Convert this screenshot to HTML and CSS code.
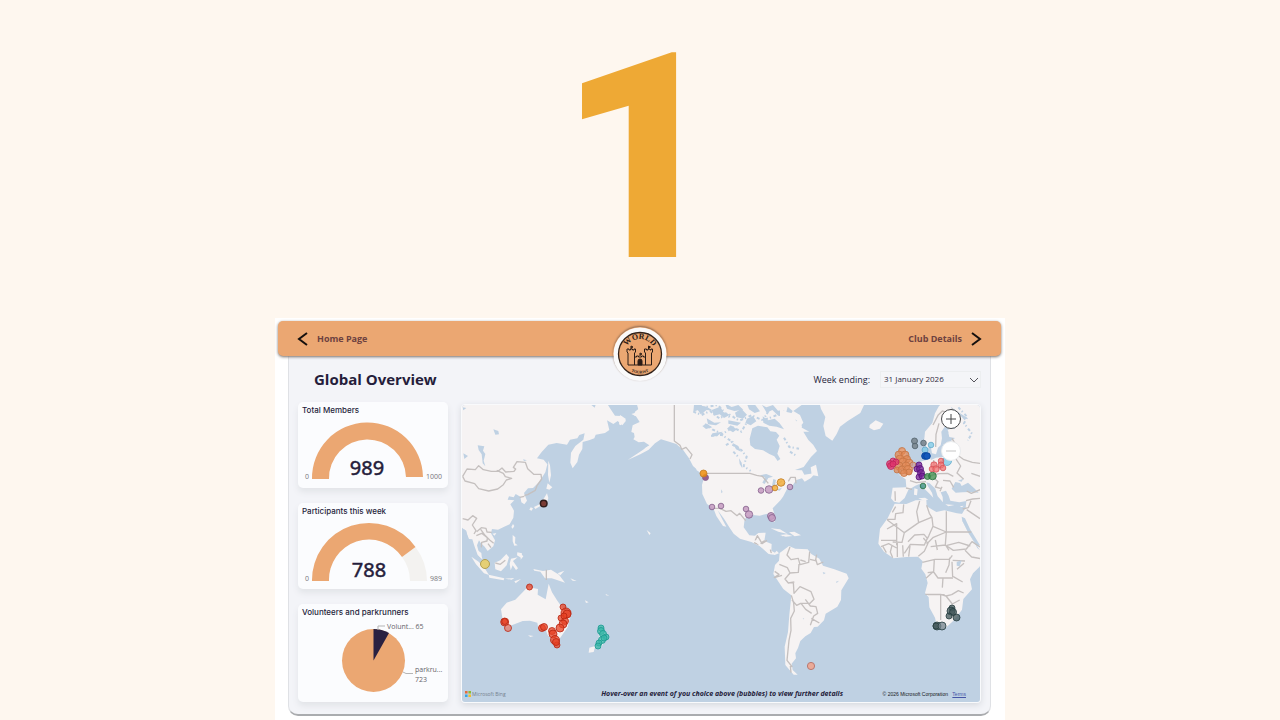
FILE: index.html
```html
<!DOCTYPE html>
<html lang="en">
<head>
<meta charset="utf-8">
<title>Global Overview</title>
<link rel="stylesheet" href="styles.css">
</head>
<body>
<div class="hero">1</div>
<main class="dashboard">
  <header class="banner">
    <a class="nav-link" href="#home"><svg class="arrow" viewBox="0 0 12 14"><path d="M10 1 2 7l8 6"/></svg>Home Page</a>
    <a class="nav-link" href="#club">Club Details<svg class="arrow" viewBox="0 0 12 14"><path d="m2 1 8 6-8 6"/></svg></a>
    <svg class="logo" viewBox="0 0 54 54" role="img" aria-label="World Tourist">
      <defs><path id="arc-top" d="M12 27a15 15 0 0 1 30 0"/><path id="arc-bottom" d="M7.500 27a19.500 19.500 0 0 0 39 0"/></defs>
      <circle cx="27" cy="27" r="26.500" fill="#fafafa"/>
      <circle cx="27" cy="27" r="21.500" fill="#eba772" stroke="#33241c" stroke-width="1.300"/>
      <text class="logo-top"><textPath href="#arc-top" startOffset="50%">WORLD</textPath></text>
      <text class="logo-bottom"><textPath href="#arc-bottom" startOffset="50%">TOURIST</textPath></text>
      <g fill="none" stroke="#2b1c16" stroke-width="1">
        <path d="M15 38V26l-1-1v-3h2v1h1.500v-1h2v1H21v-1h1.500v3l-1 1v4h2v-1h2v1h3v-1h2v1h2v-4l-1-1v-3h2v1h1.500v-1h2v1H38v-1h1.500v3l-1 1v12zM21.500 30v8M32.500 30v8M18 22v-3l2 1-2 1M35.500 22v-3l2 1-2 1M27 29v-3l2 1-2 1"/>
        <path fill="#2b1c16" d="M25 38v-4a2 2 0 0 1 4 0v4z"/>
      </g>
    </svg>
  </header>
  <section class="panel">
    <div class="title-row">
      <h1>Global Overview</h1>
      <label for="week">Week ending:</label>
      <span class="picker"><select id="week"><option>31 January 2026</option></select><svg viewBox="0 0 10 6"><path d="m1 1 4 4 4-4"/></svg></span>
    </div>
    <div class="content">
      <div class="cards">
        <article class="card">
          <h2>Total Members</h2>
          <svg viewBox="298 416 150 72">
            <path class="orange" d="M312 479a55.500 55.500 0 0 1 111-2h-17a38.500 38.500 0 0 0-77 2z"/>
            <text class="value" x="367" y="475">989</text><text class="tick" x="307" y="479">0</text><text class="tick" x="434" y="479">1000</text>
          </svg>
        </article>
        <article class="card">
          <h2>Participants this week</h2>
          <svg viewBox="298 517 150 72">
            <path fill="#f3f2f0" d="M415.500 547A57 57 0 0 1 427 581h-17a40 40 0 0 0-8-24z"/>
            <path class="orange" d="M312 581a57 57 0 0 1 103.500-34L402 557a40 40 0 0 0-73 24z"/>
            <text class="value" x="369" y="577">788</text><text class="tick" x="307" y="581">0</text><text class="tick" x="436" y="581">989</text>
          </svg>
        </article>
        <article class="card">
          <h2>Volunteers and parkrunners</h2>
          <svg viewBox="298 618 150 84">
            <circle class="orange" cx="373.500" cy="660.500" r="31.500"/>
            <path fill="#2a2141" d="M373.500 660.500V629a31.500 31.500 0 0 1 15.500 4z"/>
            <path fill="none" stroke="#b5b5b5" d="M378 630v-4h7M403 672l3 1.500h7"/>
            <text class="legend" x="387" y="629">Volunt... 65</text><text class="legend" x="415" y="672">parkru...</text><text class="legend" x="415" y="682">723</text>
          </svg>
        </article>
      </div>
      <div class="map">
        <svg class="world" viewBox="462 405 518 297" role="img" aria-label="World map of events">
          <rect x="462" y="405" width="518" height="297" fill="#bfd1e3"/>
          <!-- Asia -->
          <g transform="translate(460 400) scale(.33333)">
            <path class="land" d="M0 0H435L450 25 465 47 485 48 498 62 487 76 473 63 460 72 441 61 448 90 435 99 407 104 403 115 387 121 368 126 367 147 357 164 352 186 338 205 331 188 333 158 346 138 370 119 374 100 358 105 352 115 330 119 321 134 290 129 265 134 245 156 231 175 251 179 262 193 256 217 238 245 219 264 204 265 192 279 201 302 193 313 184 307 181 290 167 282 161 292 147 289 143 299 163 301 151 313 162 332 160 353 149 373 131 381 114 389 96 387 93 400 105 421 100 439 83 453 74 440 62 429 57 421 51 436 58 463 70 480 53 465 43 437 37 418 27 417 17 392 0 378z"/>
            <path class="land" d="M265 182l5 14 3 30-5 22-4-23zM263 250l14 12-9 7-9-3zM261 280l4 14-6 20-19 5-14 8-4-6 20-10 10-16zM212 322l7 3-4 7-7-3zM159 372l4 6-5 8-4-5zM158 405l8 7-1 18 8 6-10 1-5-13zM172 457l14 3-2 14-13-8zM430 45l30-2-8 8zM525 35l15-12v30l-18-7zM522 100l18-14v40l-15-9zM97 401l12-2-5 8z"/>
            <path class="water" d="M100 88l15 5 2 10-11 1zM53 136l20 3-4 13 7 10-5 20 5 17-8-9-3-27-9-13zM105 167l-10 23-17 12 17-12zM8 22l11 2-9 7zM10 160l14 8-11 9zM189 178l12 3-9 2zM393 14h14l-3 9zM11 387l8 5 4 21-13-17z"/>
            <path class="border" d="M8 229l13-22 25 2 10-12 14 12 24 5 20 0 12-10 11 12 25-2 5-7-7-5 11-17 25 2 7 19 18 17 22 0 2 14-14 20-5 14-23 13-10 2M110 211l20 9 6 10 19 5-16 5-9 14-17 13-27 6-30-7-12-15-29-8-7-14M179 292l14-3M8 356l16 4 14-13 12 8-13 20 11 17-6 10M50 395l14-12 14 2 3 11 14 1M62 388l13 18 14 14 12 10M49 407l16-7 17 13-1 10-16 4-1 15M84 431l9 12"/>
          </g>
          <!-- North America -->
          <g transform="translate(620 400) scale(.33333)">
            <path class="land" d="M47 0H540L545 15 520 33 540 45 550 68 540 80 568 95 550 95 565 120 580 135 591 153 573 171 551 201 525 210 546 211 553 224 586 219 573 234 554 245 546 235 529 240 519 254 503 263 490 289 482 300 458 325 465 349 465 366 456 363 442 341 419 347 392 344 374 357 371 382 388 406 405 407 415 399 437 398 433 423 455 432 454 452 470 461 449 463 423 440 394 426 360 416 341 401 329 383 312 356 297 336 293 331 308 360 319 380 309 378 289 348 280 325 261 312 247 282 246 254 251 237 242 218 219 198 207 175 190 151 169 132 150 126 123 118 105 130 86 149 61 163 23 180 67 151 88 136 72 125 56 127 40 118 50 102 34 96 38 76 59 66 48 49 34 42 57 35z"/>
            <path class="land" d="M572 202l16-8 7 35-20-4zM0 45l18 12-16 19-5-3zM74 145l12-7-8 15zM225 190l18 29-13-8zM80 390l12 10-4 5zM452 385l28 3 23 14-28-7zM507 397l16-2 20 11-19 3zM485 404l10 3-8 2z"/>
            <path class="water" d="M397 85L414 77 442 82 451 94 468 96 478 107 470 119 479 138 472 161 481 177 473 183 463 169 448 162 429 151 405 147 391 136 389 116zM419 226l20-4 20 8-14 4-11 18-7-4 8-15zM460 237l8 3-4 22-8-5zM478 256l20-9-5 9zM468 269l18-6-7 9zM303 268l5 8-4 4zM230 15l30 5 20 12-20-2-18 13-10-15zM260 55l23 13 20-1-15 9-24-3zM315 10l20 11 20-6 15 14-27 4-22-7zM426 15l13 7 20-7 15 17 17-2 14 22-30-5-18-17-17 8-7-12z"/>
            <path class="water" d="M222 15h22l13 13-10 15-12-13-15 5zM275 30l26-10 9 16 20 8-18 10-13-11-17 4zM345 38l19-12 17 18-12 12-20-5zM382 14h23l15 20-16 5-17-11zM381 56l18-8 10 16-17 12-16-7zM428 49l16 12 20-5 15 14 13 18-22-8-22-3-18-9zM503 20l15 13-8 14 22 16-15 9-21-24zM247 78l13-7 17 11-19 5zM277 100l31-5-16 13-18 2zM332 76l19 12-12 9-18-11zM338 129l17 9 8 17-15-7zM325 61l38 7-11 9-27-6zM357 175l8 13 2 17-8-13z"/>
            <path class="lakes" d="M220 35l25 10 25-12 28 22 28-13 32 20 37-16 34 15 45-17M255 72l22 16 30 14 32-20 25 13 19-32M273 107l33-2 30 20-23 13M337 134l27 16 16 20-9 28 21 15M445 34l-15 25 32 14M340 155l18 19M492 113l16 28 29 5M510 155l20 13M245 23l48-8 37 38"/>
            <path class="border" d="M163 10V123l17 13 5 12 13-6 18 22-6 13M256 220H390l20 6 17 3 18 21M466 258l20-15M505 244l7-12 14 0 2 18M280 325l20 0 18 9 15-2 18 15 8-7 18 22M405 423l7-16 7 11 7 13 15-10M402 428l14 6 18-12M451 449l3 11"/>
          </g>
          <!-- Atlantic, Europe and Africa -->
          <g transform="translate(780 400) scale(.33333)">
            <path class="land" d="M116 0L123 27 136 51 130 78 137 108 157 122 170 102 180 80 203 63 241 39 259 0zM0 25L20 36 37 40 48 62 66 77 63 95 42 80 23 75 0 53zM269 75l18-14 23 10-10 15-18 5-14-8zM0 405l20-2 18 5-21 2zM356 151l17-7 7 23 12 14 7 31-38 8 6-24-10-20zM328 188l20-8 5 18-22 7z"/>
            <path class="land" d="M605 0H500L477 18 465 40 457 69 435 95 432 126 442 145 452 139 456 160 468 163 474 143 482 136 486 115 484 95 504 66 512 55 521 62 503 89 508 111 525 114 511 124 505 153 488 171 468 173 453 180 447 169 438 160 440 180 425 184 404 204 385 221 357 224 377 238 379 262 338 263 333 295 342 305 358 308 374 294 385 270 406 257 420 251 434 267 447 280 460 293 456 278 443 257 439 247 449 250 466 266 473 289 489 307 488 291 482 277 498 272 506 287 511 302 538 307 559 303 557 323 542 349 551 372 568 402 589 434 599 450H605z"/>
            <path class="land" d="M344 311L379 312 407 301 439 300 440 319 469 336 493 331 531 340 548 342 546 361 568 401 592 444 605 455V490L598 501 579 520 570 538 576 568 550 597 546 629 522 661 493 687 472 683 465 653 448 622 446 592 435 579 443 549 436 523 424 506 428 484 414 470 379 471 340 475 312 455 295 431 300 386 323 355zM600 565l5-6v55h-5z"/>
            <path class="water" d="M515 266l11-20 14 3 5 9 19-10 18 16 14 14-26-2-22 1-21 1zM534 242l16-6-5 9zM545 350l10 5 15 32 30 49-8 3-27-40-18-36zM510 67l8-15 15 10-9 25-10-1zM512 20l18 13 31 20-7 8-16-18-15-3z"/>
            <path class="land" d="M415 295l20-2 10 6-17 2zM403 265l10 3-2 18-9-2zM496 313l27 2-18 4zM539 319l12-2-5 5z"/>
            <path class="lakes" d="M498 55l10 25-8 22 14 34M535 22l27 29-10 19 24 31-13 20"/>
            <path class="border" d="M459 75l15-29 13-13 14 5 18-12M477 70l-9 33-1 38M516 115l13 22-2 24 23 17 27 9 23 3M505 175l18-5 19 28-11 21 20 19M461 180l1 17 16 9 6-22M410 208l13 11 21 9 34-7 25-1 17 9M390 242l19 6 29-3M345 274l1 28M378 264l18 4M445 234l19-13M462 234l12 11-8 16 18 5M489 241l21 2 11 19M486 260l-6 14M560 273l14 7 26-11M558 302l20-5 26-2M573 302l-8 21-17 4M560 329l40 27M574 220l29 10"/>
            <path class="border" d="M347 320l-10 17M321 358h24l2-17 22-3 2-25M321 387l29-16v65M322 360l51 38 43-30-6-33 9-32M416 368l38-16M499 334v62l-40-17M440 316l8 24 8 13 3 26-12 27-6 12M499 396h75M350 421h-47M303 440l23-9 24 13M373 398l-7 29-28-1M384 425l20-20 28-2 10 12-9 20-42-2-18 27M309 440l10 18M336 436l-5 20 7 17M352 426v45M368 436l2 34M390 437l-4 33M430 414l14 16-11 24-18 15M440 432l20-20 39-16-3 38 11 17M452 440l44-5 24 16 39-4 17-22 24 16M466 420l6 30M501 436l35-9 35 11M555 451l20 20 28 5M427 487l38-9 43 0 9-12M463 478l-2 36-23 21M509 473l-2 22-10 23M443 518l18-2 13 18h45M518 531l-2-46M518 481l37 2M531 508l21-18M548 546l-28-16M436 583h46l16 5 17-4M482 581v79M515 584l20-12 16 7M444 584h50M487 563l2-30M498 588l19 24 22-12M515 650l14-8"/>
            <path class="water" d="M530 486l15-5-6 18-9-2z"/>
          </g>
          <!-- Oceania -->
          <g transform="translate(460 550) scale(.33333)">
            <path class="land" d="M123 178L140 158 166 149 185 130 203 111 234 117 233 134 257 148 266 101 276 127 292 152 310 177 330 202 323 232 296 270 283 276 263 255 254 232 236 239 232 218 210 212 188 213 163 223 140 231 129 216zM34 20l22 15 18 20 13 20-15-5-24-27zM86 74l47 11-2 6-43-8zM104 38l17-7 18-19 8 10-7 24-17 18-17-6zM153 26l20-4-14 11 15 22-6 5-10-14-6 15-3-20zM183 12l7 7-8 10zM220 57l29 6 24-4 24 15 18 24-24-8-16-5-20 0-14-20-18-3zM293 70l20-8-12 14zM163 94l20-7-16 13zM135 86l28-2-8 5zM375 151l11 6-8 2zM406 288l-18 5-2 15 15-2zM416 237l10-2 16 20-18 37-7-10zM204 256l17 2-10 3zM52 0l12 9 2 18-9-9zM437 132l11 5-10-1zM350 93l-19-8 7 7z"/>
            <path class="border" d="M259 59v31M106 39l15 4 15-12"/>
          </g>
          <!-- South America -->
          <g transform="translate(740 540) scale(.33333)">
            <path class="land" d="M41 0L57 4 70 24 85 36 101 43 110 32 117 40 104 45 85 41 65 23zM119 39L147 18 166 26 203 28 214 42 238 56 249 77 283 88 320 101 326 115 304 151 303 180 292 200 257 221 252 241 233 260 222 261 212 279 196 289 181 303 174 324 166 340 168 355 155 371 158 390 173 404 161 404 136 375 134 320 144 276 148 224 154 166 130 147 100 102 105 75 117 62z"/>
            <path class="border" d="M150 21l-9 24 12 14 22-4 5 19 26-7 3-32M118 73l24 10 8 16 25-2 2-25M104 94l13 9-14 10 23-7M150 99l-15 18 10 12 18-3M160 127l2 33 18-20 33 15 9 23-12 12-28 0-12 6-14-16M154 166l7 23 2 24-11 22 1 36-6 30-6 60 16 20M196 178l15 20 17 2 5 20-12 8-10 28M183 190l14 18 18 12M214 235l24 14M181 60l16 5M210 58l16 4M227 57l5 17 18-8M230 44l-4 20M151 378l2 20"/>
            <path class="water" d="M248 96l9 3-6 4zM288 125l9-3-7 7zM188 233l5 4-3 1z"/>
          </g>
          <!-- Event bubbles, coloured by region -->
          <g fill="#7a3b34" stroke="#301d1c" stroke-width="1.500"><circle cx="543.700" cy="503.500" r="3.300"/></g>
          <g fill="#e5cf75" stroke="#b3a052"><circle cx="485" cy="564" r="4.500"/></g>
          <g fill="#e74124" class="strong" stroke="#b82512"><circle cx="529.500" cy="587" r="3"/><circle cx="504.700" cy="622" r="4"/><circle cx="504.700" cy="621.500" r="3"/><circle cx="508" cy="628" r="3.500" fill="#e77868"/><circle cx="563" cy="607" r="3"/><circle cx="566" cy="613" r="5"/><circle cx="567" cy="614" r="4"/><circle cx="561" cy="618" r="3"/><circle cx="565" cy="621" r="3.500"/><circle cx="563" cy="624" r="4"/><circle cx="560" cy="628" r="4"/><circle cx="564" cy="616" r="3"/><circle cx="542" cy="628" r="3.500"/><circle cx="544" cy="627" r="3.500"/><circle cx="552" cy="631" r="3.500"/><circle cx="553" cy="634" r="4"/><circle cx="555" cy="640" r="4.500"/><circle cx="557" cy="645" r="3"/><circle cx="556" cy="642" r="3.500"/></g>
          <g fill="#38b7a8" class="strong" stroke="#1c9b91"><circle cx="601" cy="628" r="3"/><circle cx="601" cy="631" r="3.500"/><circle cx="603" cy="634" r="3.500"/><circle cx="606" cy="637" r="3"/><circle cx="602" cy="640" r="3.500"/><circle cx="599" cy="643" r="3"/><circle cx="598" cy="646" r="3"/><circle cx="604" cy="638" r="3"/></g>
          <g fill="#c49ac0" class="soft" stroke="#85608c"><circle cx="705.500" cy="477.500" r="3" fill="#884477"/><circle cx="761" cy="490.500" r="2.800"/><circle cx="769" cy="489.500" r="3.800"/><circle cx="790" cy="487" r="2.800"/><circle cx="712" cy="507" r="2.800"/><circle cx="721" cy="506" r="2.800"/><circle cx="746" cy="509" r="2.800"/><circle cx="749" cy="514.500" r="3.700"/><circle cx="771" cy="516" r="3.500"/><circle cx="772" cy="518" r="3.500"/></g>
          <g fill="#f3ae3b" class="soft" stroke="#c27c24"><circle cx="703.500" cy="473.500" r="3.500" fill="#ee8e0a"/><circle cx="775" cy="488" r="2.800"/><circle cx="781" cy="482.500" r="3.800"/></g>
          <g fill="#eaaa98" stroke="#b97871"><circle cx="811" cy="666" r="3.600"/></g>
          <g fill="#e08754" class="strong" stroke="#c67545"><circle cx="902" cy="451" r="3.500"/><circle cx="899" cy="455" r="4"/><circle cx="905" cy="455" r="4"/><circle cx="900" cy="459" r="4"/><circle cx="907" cy="459" r="3.500"/><circle cx="903" cy="462" r="4"/><circle cx="909" cy="463" r="4"/><circle cx="899" cy="466" r="4"/><circle cx="906" cy="466" r="4"/><circle cx="897" cy="470" r="3"/><circle cx="902" cy="470" r="4"/><circle cx="908" cy="470" r="4.500"/><circle cx="904" cy="473" r="3.500"/><circle cx="909" cy="472" r="3"/><circle cx="913" cy="465" r="3" fill="#c99f99"/></g>
          <g fill="#df356e" class="strong" stroke="#be2359"><circle cx="893" cy="461" r="3"/><circle cx="890" cy="464" r="3.500"/><circle cx="891" cy="466" r="3.500"/><circle cx="896" cy="462" r="3"/><circle cx="893" cy="464" r="3"/></g>
          <g fill="#75828b" class="soft" stroke="#51616b"><circle cx="914.500" cy="441" r="3"/><circle cx="915" cy="446" r="2.800"/><circle cx="923.500" cy="443" r="2.800"/></g>
          <g fill="#87cde7" class="soft" stroke="#66abc9"><circle cx="931" cy="445" r="2.800"/><circle cx="925" cy="450" r="3"/><circle cx="947" cy="461" r="4.500"/></g>
          <g fill="#1459bb" stroke="#0747a1"><circle cx="925" cy="456" r="3.300"/><circle cx="927" cy="456" r="3.300"/></g>
          <g fill="#732094" class="strong" stroke="#581279"><circle cx="919" cy="465" r="3"/><circle cx="917" cy="469" r="3"/><circle cx="920" cy="469" r="3.500"/><circle cx="921" cy="473" r="3.500"/><circle cx="919" cy="477" r="3"/><circle cx="922" cy="476" r="3"/></g>
          <g fill="#3b8d49" class="strong" stroke="#27703d"><circle cx="927.500" cy="476.500" r="3"/><circle cx="932.500" cy="476" r="3.800"/><circle cx="923" cy="486" r="2.800" fill="#318b7c"/></g>
          <g fill="#f17372" class="strong" stroke="#d65459"><circle cx="934" cy="465" r="3.200"/><circle cx="932" cy="469" r="2.800"/><circle cx="936" cy="469" r="3.200"/><circle cx="941" cy="461" r="2.800"/><circle cx="941" cy="465" r="3"/><circle cx="943" cy="468" r="2.800"/></g>
          <g fill="#42575a" class="strong" stroke="#263d40"><circle cx="937" cy="626" r="4"/><circle cx="936" cy="626" r="3"/><circle cx="942" cy="626" r="4" fill="#73838c"/><circle cx="952" cy="608" r="3"/><circle cx="951" cy="611" r="4"/><circle cx="953" cy="612" r="3.500"/><circle cx="949" cy="616" r="3"/><circle cx="956.500" cy="617.500" r="3.500"/></g>
        </svg>
        <div class="zoom-controls">
          <button type="button" aria-label="Zoom in"><svg viewBox="0 0 12 12"><path d="M6 1v10M1 6h10"/></svg></button>
          <button type="button" class="out" aria-label="Zoom out"><svg viewBox="0 0 12 12"><path d="M1 6h10"/></svg></button>
        </div>
        <footer class="map-footer">
          <span class="bing"><svg viewBox="0 0 7 7"><path fill="#e66c3c" d="M0 0h3v3H0z"/><path fill="#8bbd36" d="M4 0h3v3H4z"/><path fill="#35a7e5" d="M0 4h3v3H0z"/><path fill="#f3bf2c" d="M4 4h3v3H4z"/></svg>Microsoft Bing</span>
          <em>Hover-over an event of you choice above (bubbles) to view further details</em>
          <span class="copyright">© 2026 Microsoft Corporation <a href="#terms">Terms</a></span>
        </footer>
      </div>
    </div>
  </section>
</main>
</body>
</html>
```
FILE: styles.css
```css
* { box-sizing: border-box; }
body { margin: 0; background: #fef7ef; font-family: "Open Sans", "Noto Sans", sans-serif; color: #251d3b; }
svg { display: block; }
.hero { height: 318px; padding-left: 4px; text-align: center; font: 900 288px/318px Roboto, sans-serif; color: #eea935; }
.dashboard { max-width: 730px; margin: 0 auto; padding: 3px 4px 6px 3px; background: #fff; }
.banner { position: relative; z-index: 1; display: flex; justify-content: space-between; align-items: center; height: 35px; padding: 0 19px; border-radius: 5px; background: #eba772; box-shadow: 0 1px 3px #77706b; }
.nav-link { display: flex; align-items: center; gap: 8px; color: #6d4140; font-size: 9px; font-weight: 700; line-height: 14px; text-decoration: none; }
.arrow { width: 12px; height: 14px; fill: none; stroke: #15100e; stroke-width: 2; }
.logo { position: absolute; left: 50%; top: 6px; width: 54px; height: 54px; margin-left: -27px; border-radius: 50%; box-shadow: 0 -1px 2px #8b6a53; }
.logo text { text-anchor: middle; fill: #2b1c16; font-family: "Liberation Serif", serif; font-weight: 700; }
.logo .logo-top { font-size: 8px; }
.logo .logo-bottom { font-size: 4px; }
.panel { margin: 0 10px; padding: 0 9px 11px; border: 1px solid #dfe1e5; border-top: 0; border-bottom: 2px solid #aaacaf; border-radius: 0 0 10px 10px; background: #f3f4f8; }
.title-row { display: flex; align-items: center; height: 46px; padding-left: 16px; }
h1 { flex: 1; margin: 0; font-size: 15px; line-height: 20px; }
.title-row label { margin-right: 10px; font-size: 9px; }
.picker { position: relative; display: flex; width: 101px; }
.picker select { width: 100%; height: 17px; padding: 0 3px; border: 1px solid #eceef0; background: #f4f5f8; color: #302a3c; font: 8px/14px "Open Sans", sans-serif; appearance: none; }
.picker svg { position: absolute; right: 2px; top: 6px; width: 10px; height: 6px; fill: none; stroke: #55535a; pointer-events: none; }
.content { display: flex; gap: 13px; align-items: stretch; }
.cards { flex: 0 0 150px; display: flex; flex-direction: column; gap: 15px; }
.card { border-radius: 5px; background: #fbfcfe; box-shadow: 0 4px 6px #e2e4e8; }
.card h2 { margin: 0; padding: 2px 4px 0; height: 14px; font: 500 8px/12px Inter, sans-serif; white-space: nowrap; }
.card svg { width: 100%; }
.card text { font-family: "Open Sans", sans-serif; }
.orange { fill: #eba772; }
.card .value { fill: #251d3b; stroke: #251d3b; stroke-width: .5; font-family: "Noto Sans", sans-serif; font-size: 20px; text-anchor: middle; }
.tick { fill: #77757a; font-size: 7px; text-anchor: middle; }
.legend { fill: #66646a; font-size: 7px; }
.map { position: relative; flex: 1; align-self: flex-start; margin-top: 2px; border: 1px solid #f9fafc; border-radius: 4px; overflow: hidden; box-shadow: 0 2px 6px #d5d8dd; }
.world { width: 100%; }
.land { fill: #f6f3f3; }
.water { fill: #bfd1e3; }
.lakes { fill: none; stroke: #bfd1e3; stroke-width: 6; stroke-dasharray: 9 6 4 8; }
.border { fill: none; stroke: #c5c0bf; stroke-width: 4; stroke-linejoin: round; }
.soft { fill-opacity: .85; stroke-opacity: .8; }
.strong { fill-opacity: .75; stroke-opacity: .8; }
.zoom-controls { position: absolute; right: 19px; top: 4px; display: flex; flex-direction: column; gap: 12px; }
.zoom-controls button { display: grid; place-items: center; width: 20px; height: 20px; padding: 0; border: 1px solid #47484a; border-radius: 50%; background: #fff; }
.zoom-controls svg { width: 12px; height: 12px; stroke: #47484a; fill: none; }
.zoom-controls .out { border-color: #e9ebed; }
.zoom-controls .out svg { stroke: #c3c3c3; }
.map-footer { position: absolute; left: 3px; right: 14px; bottom: 2px; display: flex; justify-content: space-between; align-items: center; font-size: 5px; line-height: 12px; white-space: nowrap; }
.bing { display: flex; align-items: center; gap: 1px; color: #73808d; }
.bing svg { width: 6px; height: 6px; }
.map-footer em { padding-left: 56px; font-size: 7px; font-weight: 700; }
.copyright { font-family: "Liberation Sans", sans-serif; color: #16191c; }
.copyright a { margin-left: 3px; color: #4655a7; }
```
